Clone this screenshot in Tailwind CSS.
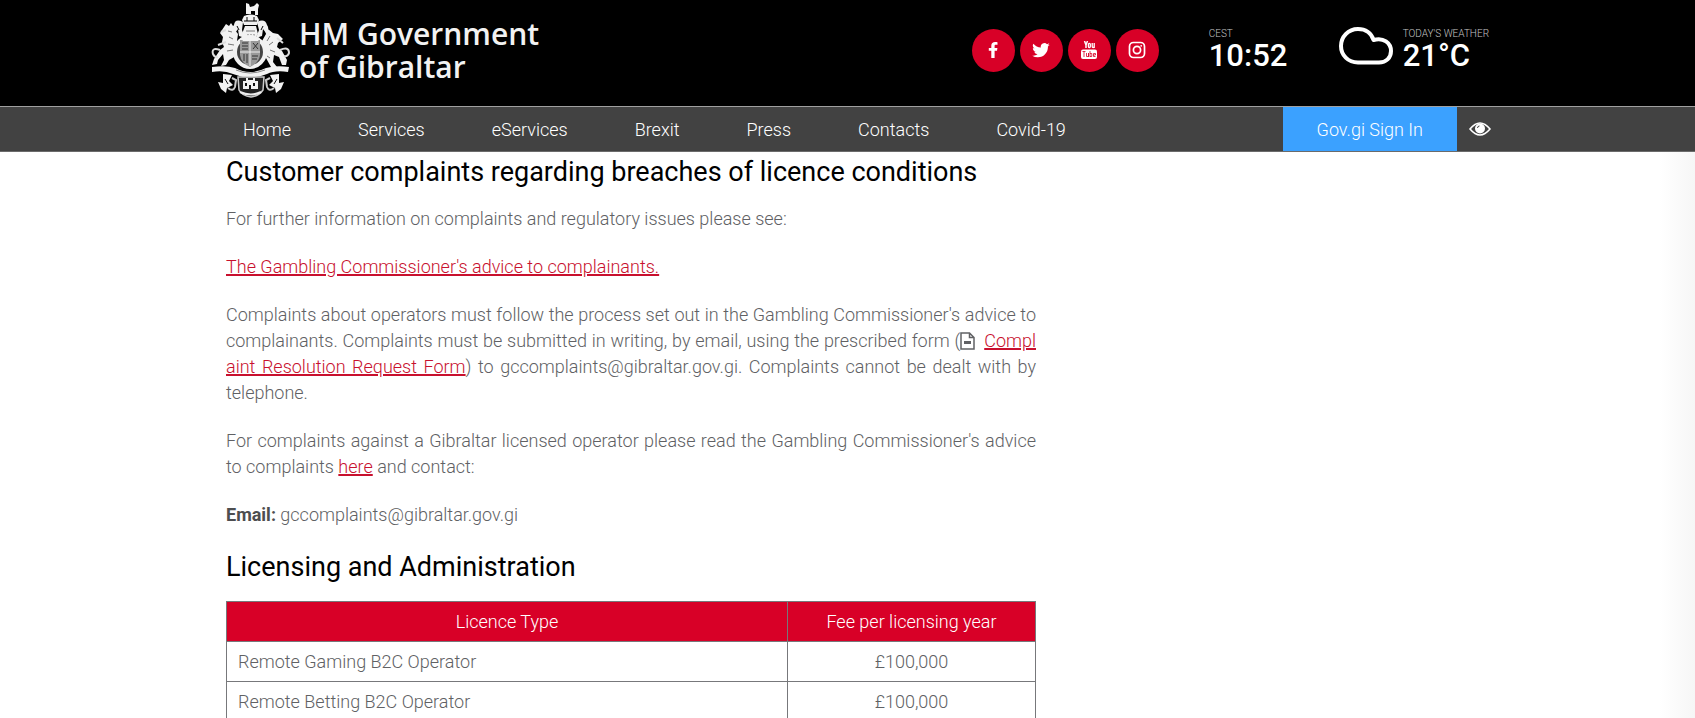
<!DOCTYPE html>
<html lang="en">
<head>
    <meta charset="UTF-8">
    <meta name="viewport" content="width=device-width, initial-scale=1.0">
    <title>Remote Gambling - HM Government of Gibraltar</title>
    <script src="https://cdn.jsdelivr.net/npm/@tailwindcss/browser@4"></script>
</head>
<body class="bg-[linear-gradient(to_left,#f6f6f6,#ffffff_36px)] font-['Roboto',sans-serif] font-light text-[#606164]">
    <header>
        <div class="bg-black">
            <div class="mx-auto flex h-[106px] max-w-[1287px] items-center justify-between pr-[2px] pb-[6px] pl-[7px]">
                <!-- Logo -->
                <a href="#" class="flex items-center gap-[8px] text-[#f2f2f2]">
                    <svg class="h-[96px] w-[80px]" viewBox="0 0 80 96" fill="#f2f2f2" aria-hidden="true">
                        <!-- crest: lion, crown and helm -->
                        <path d="M35 1l3 1 1 3 4-1 3-3 2 2-1 4v6h-3V9h-4v3h-5V8z"/>
                        <path d="M33 14q6-3 13 0l2 4-2 5H33l-2-5z"/>
                        <path d="M33 19h13M36 15v4M43 15v4" stroke="#000" fill="none"/>
                        <path d="M34 24h11l2 8-4 6h-8l-4-6z"/>
                        <path d="M35 29h9M37 32v4M40 32v4M43 32v4" stroke="#777" fill="none"/>
                        <path d="M32 20q-8-4-9 3-3 4 1 8l3-4 1 7 6 2-3-8zM46 20q8-4 10 3 3 4-1 8l-3-4-1 7-6 2 3-8z"/>
                        <path d="M26 24l2 4M52 24l-2 4" stroke="#000" fill="none"/>
                        <!-- lion -->
                        <path d="M15 22l3 2 2-3 2 3 3-1-1 5 3 4-1 7 2 8-3 7-7 4-3 5-5 1 3-6-1-6-5 6-1 4-5 1 2-6 6-9 4-3-2-5 1-5-3-4z"/>
                        <path d="M9 48Q0 45 2 52q2 4 5 3M15 28l-5 2M15 40l-8 3" stroke="#ddd" stroke-width="2" fill="none"/>
                        <path d="M17 29l4 1M18 35l4 2M17 42l6 1M16 49l6-1" stroke="#777" fill="none"/>
                        <!-- unicorn -->
                        <path d="M53 24l9 7 5 1 5 5-5 4-1 4 5 4 5 9-1 5h-4l-3-8-5-2-1 7 4 5h-6l-5-9-5-5 1-12 4-7z"/>
                        <path d="M69 48q9-4 9 3-1 4-5 3M66 36l6 5" stroke="#ddd" stroke-width="2" fill="none"/>
                        <path d="M59 34l-3 5M62 40l-4 3M59 48l5 2M56 54l3 2" stroke="#777" fill="none"/>
                        <!-- garter and quartered shield -->
                        <circle cx="39" cy="50" r="15" fill="#444" stroke="#f2f2f2" stroke-width="4"/>
                        <path d="M29 38h20v15q-1 8-10 12-9-4-10-12z" fill="#999"/>
                        <path d="M39 38v26M29 50h20" stroke="#eee" fill="none"/>
                        <path d="M31 41h6M31 44h6M31 47h6M41 54h6M41 57h5M42 41l5 6M47 41l-5 6M33 52v7M36 52v9" stroke="#333" fill="none"/>
                        <path d="M30 36q9-5 19 0l-2 3H32z"/>
                        <!-- compartment and scroll -->
                        <path d="M1 65q14-2 23 1 15 8 31 0 10-3 23-1l-1 5q-13-2-21 2-17 7-34 0-9-4-21-2z"/>
                        <path d="M25 68q14 6 29 0" stroke="#888" fill="none"/>
                        <path d="M12 72l9 1-3 6 4 4-6 3-1 5-5-4-3-7 5 1zM68 72l-9 1 3 6-4 4 6 3 1 5 5-4 3-7-5 1z"/>
                        <path d="M17 86q5 4 7-1l1-7-4-2M63 86q-5 4-7-1l-1-7 4-2" stroke="#ccc" stroke-width="2" fill="none"/>
                        <path d="M14 77l3 5M66 77l-3 5" stroke="#111" fill="none"/>
                        <!-- castle badge -->
                        <path d="M27 75h26l-1 13q-4 6-12 7-9-1-12-7z" fill="#222" stroke="#ccc" stroke-width="1.5"/>
                        <path d="M32 79h3v-3h2v2h5v-2h2v3h3v8H32z"/>
                        <path d="M35 81v3M39 83v4M43 81v3" stroke="#111" stroke-width="2" fill="none"/>
                        <path d="M29 90q11 5 21 0" stroke="#eee" stroke-width="2" fill="none"/>
                    </svg>
                    <span class="font-['Open_Sans',sans-serif] text-[30px] leading-[33px] font-semibold">HM Government<br>of Gibraltar</span>
                </a>

                <div class="flex items-center">
                    <!-- Social links -->
                    <div class="flex gap-[5px]">
                        <a href="#" aria-label="Facebook" class="flex size-[43px] items-center justify-center rounded-full bg-[#d80027]">
                            <svg class="size-[18px]" viewBox="0 0 18 18" fill="#fff"><path d="M13.500 1.200v2.600h-1.600c-1.100 0-1.300.5-1.300 1.300v1.800h2.800l-.4 2.900h-2.400V17h-3.300V9.800H4.800V6.900h2.500V4.700C7.300 2.300 8.800 1 11.200 1c1 0 2 .1 2.300.2z"/></svg>
                        </a>
                        <a href="#" aria-label="Twitter" class="flex size-[43px] items-center justify-center rounded-full bg-[#d80027]">
                            <svg class="size-[18px]" viewBox="0 0 24 24" fill="#fff"><path d="M23.600 4.900a9.500 9.500 0 0 1-2.700.8 4.800 4.800 0 0 0 2.100-2.700 9.600 9.600 0 0 1-3 1.200 4.800 4.800 0 0 0-8.200 4.400A13.600 13.600 0 0 1 1.900 3.600a4.800 4.800 0 0 0 1.500 6.400 4.800 4.800 0 0 1-2.200-.6 4.800 4.800 0 0 0 3.900 4.800 4.800 4.800 0 0 1-2.200.1 4.800 4.800 0 0 0 4.500 3.300A9.600 9.600 0 0 1 .3 19.500a13.600 13.600 0 0 0 7.400 2.200c8.900 0 14-7.500 13.500-14.300a9.700 9.700 0 0 0 2.400-2.500z"/></svg>
                        </a>
                        <a href="#" aria-label="YouTube" class="flex size-[43px] items-center justify-center rounded-full bg-[#d80027]">
                            <svg class="h-[18px] w-[16px]" viewBox="0 0 16 18" fill="none" stroke="#fff">
                                <path d="M3.500 0l1.500 4v3M6.500 0L5 4" stroke-width="1.500"/>
                                <rect x="7.400" y="2.300" width="1.900" height="4.200" rx=".9" stroke-width="1.300"/>
                                <path d="M11.200 2v3.500q0 1 1 1t1-1V2v5" stroke-width="1.300"/>
                                <rect x="0" y="8.500" width="16" height="9.500" rx="2" fill="#fff" stroke="none"/>
                                <path d="M1.500 10.500h3M3 10.500V16M5.500 12v3.500h2V12v4M9 10v6M9 12.500h1.800v3H9M14.500 15.500h-2v-3h2v1.500h-2" stroke="#d80027" stroke-width=".8"/>
                            </svg>
                        </a>
                        <a href="#" aria-label="Instagram" class="flex size-[43px] items-center justify-center rounded-full bg-[#d80027]">
                            <svg class="size-[18px]" viewBox="0 0 18 18" fill="none" stroke="#fff" stroke-width="1.700"><rect x="1.500" y="1.500" width="15" height="15" rx="4"/><circle cx="9" cy="9" r="3.600"/><circle cx="13.200" cy="4.800" r=".9" fill="#fff" stroke="none"/></svg>
                        </a>
                    </div>

                    <div class="ml-[50px] w-[130px] text-white">
                        <p class="text-[10px] leading-[12px] text-[#c4c4c4]">CEST</p>
                        <p class="text-[31px] leading-[32px] font-medium">10:52</p>
                    </div>
                    <svg class="mb-[8px] h-[38px] w-[54px]" viewBox="0 0 54 38" fill="none" stroke="#fff" stroke-width="4" stroke-linejoin="round" aria-hidden="true"><path d="M19 35.500C9 35.500 2 28 2 19S9 2 19 2c7.500 0 13.500 4 15.500 11 10-3 17.500 3 17.500 11 0 7-5 11.500-12 11.500z"/></svg>
                    <div class="ml-[10px] text-white">
                        <p class="text-[10px] leading-[12px] text-[#c4c4c4]">TODAY'S WEATHER</p>
                        <p class="text-[31px] leading-[32px] font-medium">21°C</p>
                    </div>
                </div>
            </div>
        </div>

        <!-- Main menu -->
        <nav class="border-y border-t-[#a0a0a0] border-b-[#6b6b6b] bg-[#424242] text-[18px] text-white">
            <div class="mx-auto flex h-[44px] max-w-[1287px] items-center gap-[67px] pl-[39px]">
                <a href="#">Home</a>
                <a href="#">Services</a>
                <a href="#">eServices</a>
                <a href="#">Brexit</a>
                <a href="#">Press</a>
                <a href="#">Contacts</a>
                <a href="#">Covid-19</a>
                <div class="ml-auto flex h-full items-center gap-[12px]">
                    <a href="#" class="flex h-full items-center bg-[#3ba1ff] px-[34px]">Gov.gi Sign In</a>
                    <button type="button" aria-label="Accessibility">
                        <svg class="h-[14px] w-[22px]" viewBox="0 0 22 14"><path d="M1 7q10-12 20 0-10 12-20 0z" fill="none" stroke="#fff" stroke-width="1.600"/><circle cx="11" cy="6.500" r="5" fill="#fff"/><path d="M8.500 6Q8.500 4 10.500 4" fill="none" stroke="#424242"/></svg>
                    </button>
                </div>
            </div>
        </nav>
    </header>

    <main class="mx-auto max-w-[1287px] px-[22px] pt-[3px]">
        <div class="max-w-[810px] text-[18px] leading-[26px]">
            <h2 class="mb-[17px] text-[27px] leading-[34px] font-normal text-black">Customer complaints regarding breaches of licence conditions</h2>
            <p class="mb-[22px]">For further information on complaints and regulatory issues please see:</p>
            <p class="mb-[22px]"><a href="#" class="text-[#c8102e] underline decoration-2">The Gambling Commissioner's advice to complainants.</a></p>
            <p class="mb-[22px] text-justify">Complaints about operators must follow the process set out in the Gambling Commissioner's advice to complainants. Complaints must be submitted in writing, by email, using the prescribed form (<svg class="mr-[9px] inline h-[18px] w-[15px] align-[-3px]" viewBox="0 0 15 18" fill="none" stroke="#606164" stroke-width="1.500" aria-hidden="true"><path d="M1 1h8.500L14 5.500V17H1zM9.500 1v4.500H14"/><path d="M4 10.500h7" stroke-width="3"/></svg><a href="#" class="break-all text-[#c8102e] underline decoration-2">Complaint Resolution Request Form</a>) to gccomplaints@gibraltar.gov.gi. Complaints cannot be dealt with by telephone.</p>
            <p class="mb-[22px] text-justify">For complaints against a Gibraltar licensed operator please read the Gambling Commissioner's advice to complaints <a href="#" class="text-[#c8102e] underline decoration-2">here</a> and contact:</p>
            <p class="mb-[22px]"><strong class="font-bold text-[#4d4e50]">Email:</strong> gccomplaints@gibraltar.gov.gi</p>

            <h2 class="mb-[17px] text-[27px] leading-[34px] font-normal text-black">Licensing and Administration</h2>
            <table class="w-full table-fixed border-collapse leading-[25px]">
                <thead class="bg-[#d80027] text-white">
                    <tr>
                        <th class="border border-[#77787b] px-[11px] py-[7px] font-light">Licence Type</th>
                        <th class="w-[248px] border border-[#77787b] px-[11px] py-[7px] font-light">Fee per licensing year</th>
                    </tr>
                </thead>
                <tbody>
                    <tr>
                        <td class="border border-[#77787b] px-[11px] py-[7px]">Remote Gaming B2C Operator</td>
                        <td class="border border-[#77787b] px-[11px] py-[7px] text-center">£100,000</td>
                    </tr>
                    <tr>
                        <td class="border border-[#77787b] px-[11px] py-[7px]">Remote Betting B2C Operator</td>
                        <td class="border border-[#77787b] px-[11px] py-[7px] text-center">£100,000</td>
                    </tr>
                </tbody>
            </table>
        </div>
    </main>
</body>
</html>
